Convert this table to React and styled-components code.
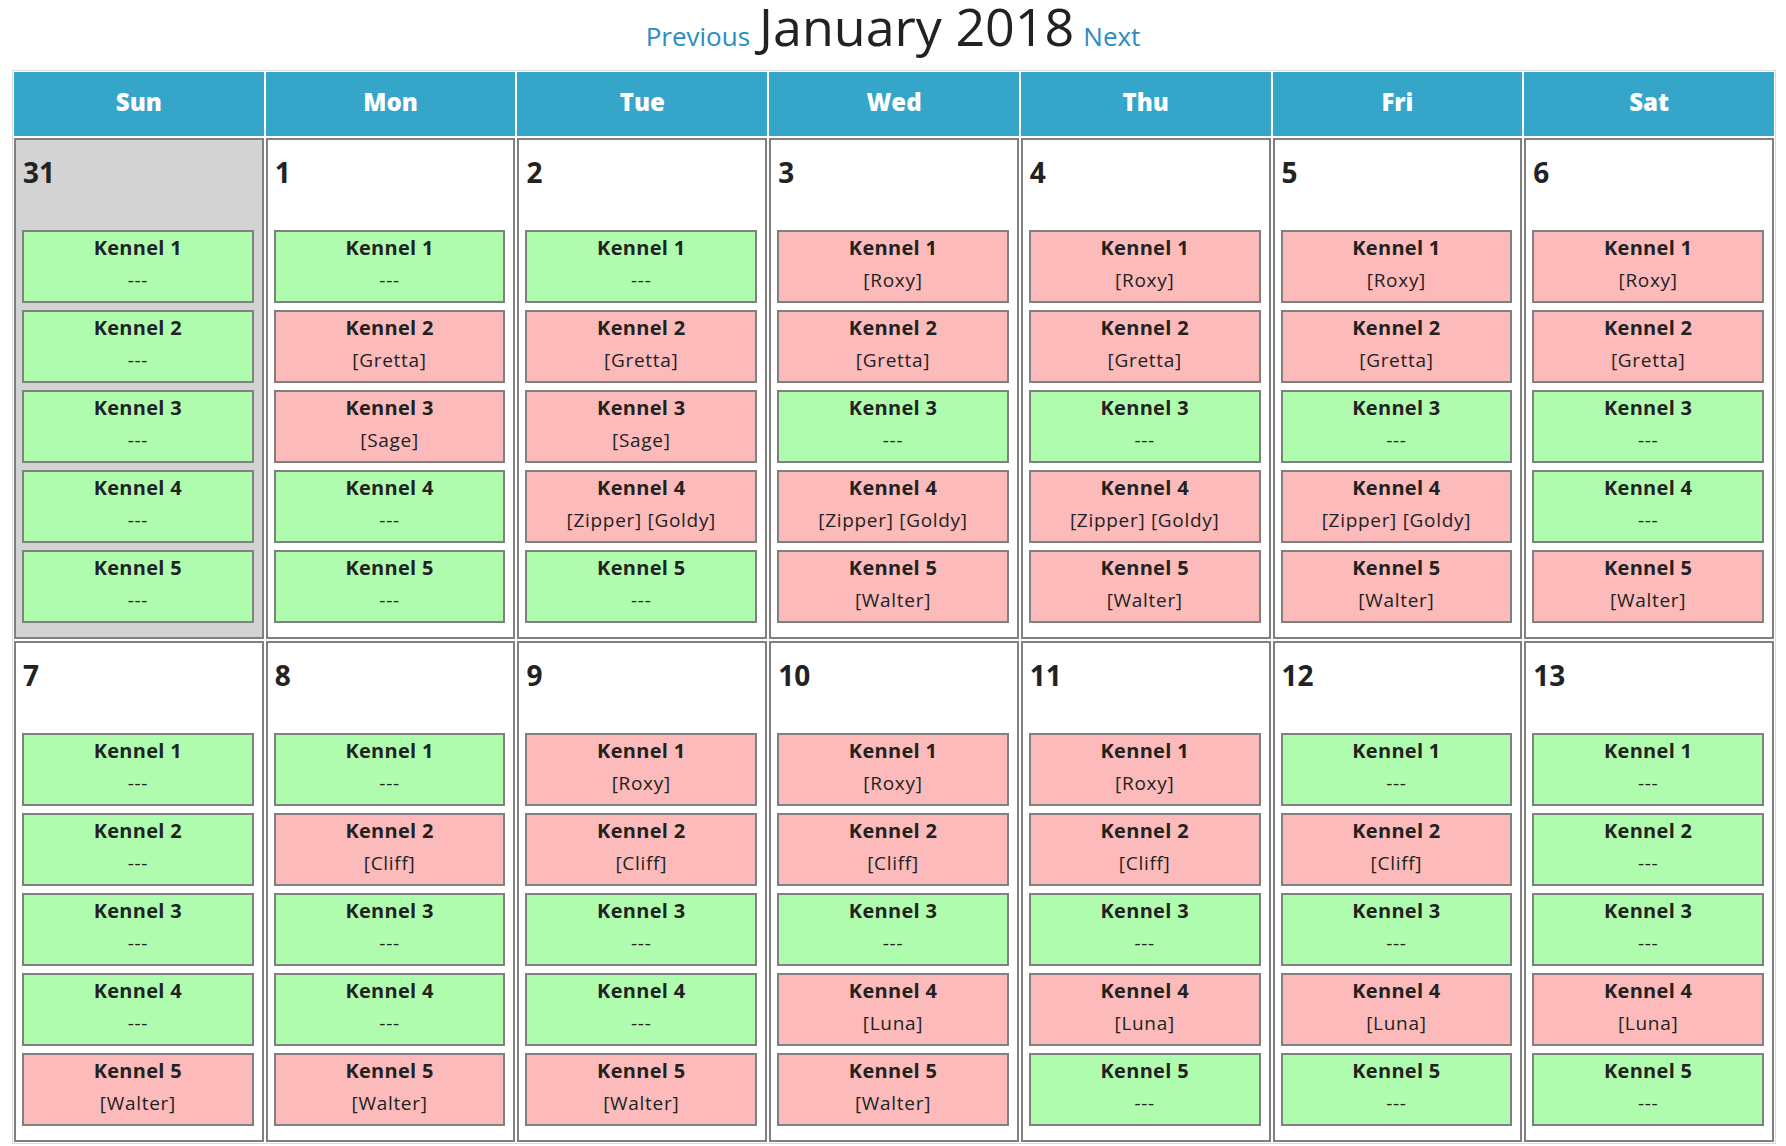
import React from "react";
import styled, { createGlobalStyle } from "styled-components";

const days = ["Sun", "Mon", "Tue", "Wed", "Thu", "Fri", "Sat"];

// occupants per kennel (1..5), empty string = free
const weeks = [
  [
    { date: 31, outside: true, k: ["", "", "", "", ""] },
    { date: 1, k: ["", "[Gretta]", "[Sage]", "", ""] },
    { date: 2, k: ["", "[Gretta]", "[Sage]", "[Zipper] [Goldy]", ""] },
    { date: 3, k: ["[Roxy]", "[Gretta]", "", "[Zipper] [Goldy]", "[Walter]"] },
    { date: 4, k: ["[Roxy]", "[Gretta]", "", "[Zipper] [Goldy]", "[Walter]"] },
    { date: 5, k: ["[Roxy]", "[Gretta]", "", "[Zipper] [Goldy]", "[Walter]"] },
    { date: 6, k: ["[Roxy]", "[Gretta]", "", "", "[Walter]"] },
  ],
  [
    { date: 7, k: ["", "", "", "", "[Walter]"] },
    { date: 8, k: ["", "[Cliff]", "", "", "[Walter]"] },
    { date: 9, k: ["[Roxy]", "[Cliff]", "", "", "[Walter]"] },
    { date: 10, k: ["[Roxy]", "[Cliff]", "", "[Luna]", "[Walter]"] },
    { date: 11, k: ["[Roxy]", "[Cliff]", "", "[Luna]", ""] },
    { date: 12, k: ["", "[Cliff]", "", "[Luna]", ""] },
    { date: 13, k: ["", "", "", "[Luna]", ""] },
  ],
];

const App = () => {
  return (
    <Page>
      <GlobalStyle />
      <Title>
        <NavLink href="#">Previous</NavLink>
        <Month>January 2018</Month>
        <NavLink href="#">Next</NavLink>
      </Title>
      <Calendar>
        {days.map((d) => (
          <DayHead key={d}>{d}</DayHead>
        ))}
        {weeks.flat().map((day) => (
          <DayCell key={day.date} $outside={day.outside}>
            <DateNum>{day.date}</DateNum>
            <Kennels>
              {day.k.map((who, i) => (
                <Kennel key={i} $taken={who !== ""}>
                  <KennelName>Kennel {i + 1}</KennelName>
                  <Occupant>{who || "---"}</Occupant>
                </Kennel>
              ))}
            </Kennels>
          </DayCell>
        ))}
      </Calendar>
    </Page>
  );
};

export default App;

const GlobalStyle = createGlobalStyle`
  body {
    margin: 0;
    background: #fff;
    font-family: "Open Sans", "Liberation Sans", sans-serif;
    color: #222;
  }
`;

const Page = styled.div`
  width: 100%;
`;

const Title = styled.div`
  display: flex;
  justify-content: center;
  align-items: baseline;
  gap: 9px;
  height: 70px;
`;

const NavLink = styled.a`
  font-size: 26px;
  line-height: 1;
  color: #2a8dc0;
  text-decoration: none;
`;

const Month = styled.span`
  font-size: 52px;
  line-height: 52px;
  font-weight: 400;
  color: #222;
`;

const Calendar = styled.div`
  display: grid;
  grid-template-columns: repeat(7, 1fr);
  gap: 2px;
  margin: 0 10px 0 12px;
  padding: 1px;
  border: 1px solid #dcdcdc;
`;

const DayHead = styled.div`
  display: flex;
  align-items: center;
  justify-content: center;
  height: 64px;
  padding-bottom: 5px;
  box-sizing: border-box;
  background: #35a6ca;
  color: #fff;
  font-size: 24px;
  font-weight: 800;
`;

const DayCell = styled.div`
  border: 2px solid #808080;
  background: ${(p) => (p.$outside ? "#d3d3d3" : "#fff")};
  padding: 0 8px 14px 6px;
  height: 501px;
  box-sizing: border-box;
  display: flex;
  flex-direction: column;
`;

const DateNum = styled.div`
  margin-top: 15px;
  padding-left: 1px;
  font-size: 28px;
  line-height: 34px;
  font-weight: 700;
  color: #222;
`;

const Kennels = styled.div`
  margin-top: 41px;
  display: flex;
  flex-direction: column;
  gap: 7px;
`;

const Kennel = styled.div`
  height: 73px;
  box-sizing: border-box;
  border: 2px solid #808080;
  background: ${(p) => (p.$taken ? "#fcbaba" : "#b0fcae")};
  padding-top: 4px;
  text-align: center;
  color: #222;
`;

const KennelName = styled.div`
  font-size: 20px;
  line-height: 24px;
  font-weight: 700;
  letter-spacing: 0.3px;
`;

const Occupant = styled.div`
  margin-top: 8px;
  font-size: 19px;
  line-height: 24px;
  letter-spacing: 0.7px;
`;
